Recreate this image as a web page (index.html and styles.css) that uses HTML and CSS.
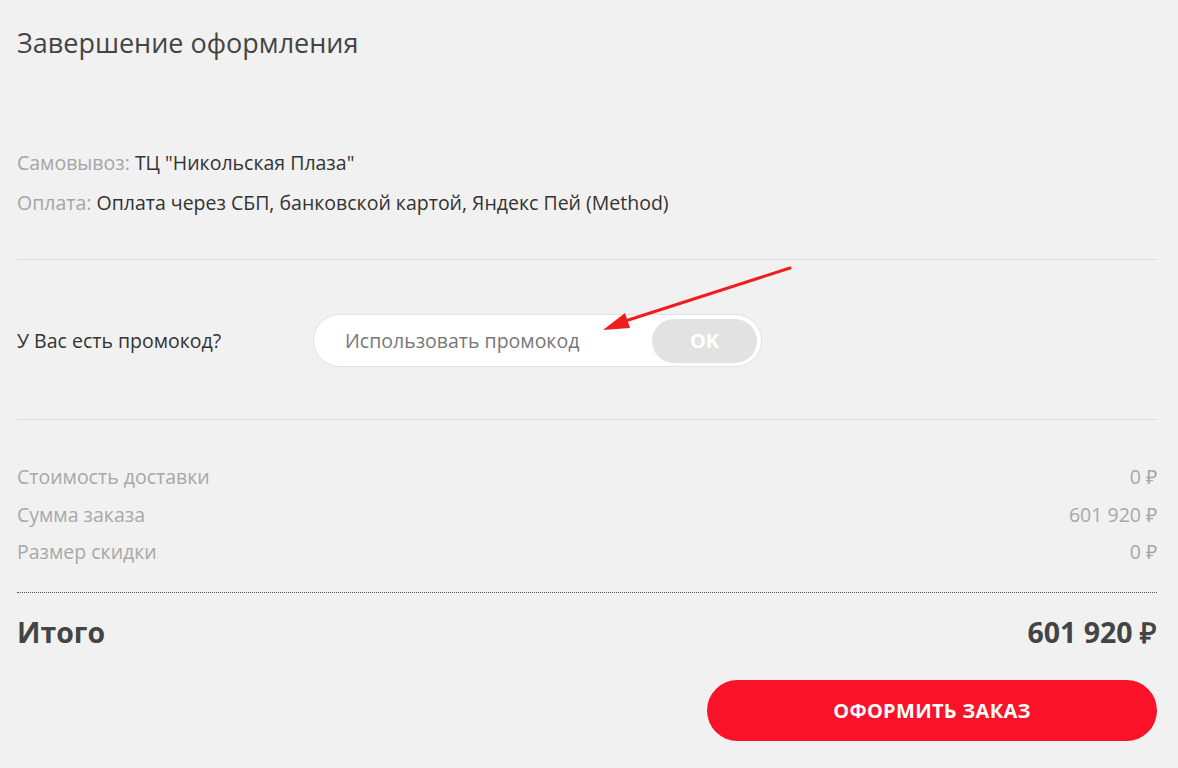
FILE: index.html
```html
<!DOCTYPE html>
<html lang="ru">
<head>
    <meta charset="UTF-8">
    <title>Завершение оформления</title>
    <link rel="stylesheet" href="styles.css">
</head>
<body>
    <div class="checkout">
        <h1 class="title">Завершение оформления</h1>

        <div class="details">
            <p><span class="muted">Самовывоз:</span> ТЦ "Никольская Плаза"</p>
            <p><span class="muted">Оплата:</span> Оплата через СБП, банковской картой, Яндекс Пей (Method)</p>
        </div>

        <div class="promo">
            <div class="promo-label">У Вас есть промокод?</div>
            <div class="promo-field">
                <input type="text" placeholder="Использовать промокод">
                <button class="btn-ok">OK</button>
            </div>
            <svg class="arrow" width="200" height="70" viewBox="0 0 200 70">
                <line x1="195" y1="4" x2="24" y2="59" stroke="#f01d1d" stroke-width="3" stroke-linecap="round"/>
                <polygon points="8,66 30,49 35,64" fill="#f01d1d"/>
            </svg>
        </div>

        <div class="summary">
            <div class="row"><span>Стоимость доставки</span><span>0 ₽</span></div>
            <div class="row"><span>Сумма заказа</span><span>601 920 ₽</span></div>
            <div class="row"><span>Размер скидки</span><span>0 ₽</span></div>
        </div>

        <div class="total">
            <span>Итого</span>
            <span>601 920 ₽</span>
        </div>

        <div class="actions">
            <button class="btn-order">Оформить заказ</button>
        </div>
    </div>
</body>
</html>
```

FILE: styles.css
```css
body {
    margin: 0;
    padding: 0;
    background: #f1f1f1;
    font-family: "Open Sans", Arial, sans-serif;
    color: #333;
}

.checkout {
    padding: 26px 21px 20px 17px;
}

.title {
    margin: 0;
    font-size: 27px;
    font-weight: 400;
    color: #444;
    line-height: 34px;
}

.details {
    margin-top: 83px;
    padding-bottom: 36px;
    border-bottom: 1px solid #dedede;
}

.details p {
    margin: 0;
    font-size: 19.5px;
    line-height: 40px;
}

.muted {
    color: #a5a5a5;
}

.promo {
    position: relative;
    display: flex;
    align-items: center;
    padding: 54px 0 52px;
    border-bottom: 1px solid #dedede;
}

.promo-label {
    width: 296px;
    font-size: 19.5px;
    color: #333;
}

.promo-field {
    display: flex;
    align-items: center;
    width: 443px;
    height: 45px;
    padding: 3px 4px 3px 0;
    background: #fff;
    border: 1px solid #e2e2e2;
    border-radius: 27px;
}

.promo-field input {
    flex: 1;
    min-width: 0;
    border: none;
    outline: none;
    background: none;
    padding: 0 0 0 31px;
    font-family: "Open Sans", Arial, sans-serif;
    font-size: 19.5px;
    color: #333;
}

.promo-field input::placeholder {
    color: #777;
}

.btn-ok {
    width: 105px;
    height: 44px;
    border: none;
    border-radius: 22px;
    background: #e2e2e2;
    color: #fff;
    font-family: "Open Sans", Arial, sans-serif;
    font-size: 20px;
    font-weight: bold;
}

.arrow {
    position: absolute;
    left: 578px;
    top: 4px;
}

.summary {
    padding: 38px 0 21px;
    border-bottom: 1px dotted #555;
}

.row {
    display: flex;
    justify-content: space-between;
    font-size: 19.5px;
    line-height: 37.5px;
    color: #a8a8a8;
}

.total {
    display: flex;
    justify-content: space-between;
    padding-top: 22px;
    font-size: 28.5px;
    font-weight: bold;
    color: #444;
    line-height: 34px;
}

.actions {
    display: flex;
    justify-content: flex-end;
    margin-top: 31px;
}

.btn-order {
    width: 450px;
    height: 61px;
    border: none;
    border-radius: 31px;
    background: #f91228;
    color: #fff;
    font-family: "Open Sans", Arial, sans-serif;
    font-size: 20px;
    font-weight: bold;
    text-transform: uppercase;
    letter-spacing: 0.3px;
}
```
